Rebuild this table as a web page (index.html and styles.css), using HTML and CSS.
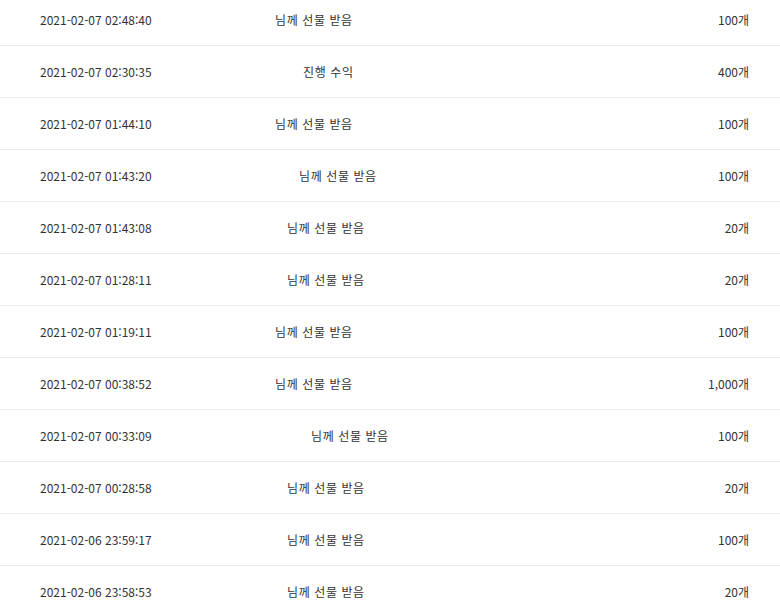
FILE: index.html
```html
<!DOCTYPE html>
<html lang="ko">
<head>
<meta charset="utf-8">
<link rel="stylesheet" href="styles.css">
</head>
<body>
<ul class="history">
  <li class="row"><span class="date">2021-02-07 02:48:40</span><span class="desc">님께 선물 받음</span><span class="amount">100개</span></li>
  <li class="row"><span class="date">2021-02-07 02:30:35</span><span class="desc off-28">진행 수익</span><span class="amount">400개</span></li>
  <li class="row"><span class="date">2021-02-07 01:44:10</span><span class="desc">님께 선물 받음</span><span class="amount">100개</span></li>
  <li class="row"><span class="date">2021-02-07 01:43:20</span><span class="desc off-24">님께 선물 받음</span><span class="amount">100개</span></li>
  <li class="row"><span class="date">2021-02-07 01:43:08</span><span class="desc off-12">님께 선물 받음</span><span class="amount">20개</span></li>
  <li class="row"><span class="date">2021-02-07 01:28:11</span><span class="desc off-12">님께 선물 받음</span><span class="amount">20개</span></li>
  <li class="row"><span class="date">2021-02-07 01:19:11</span><span class="desc">님께 선물 받음</span><span class="amount">100개</span></li>
  <li class="row"><span class="date">2021-02-07 00:38:52</span><span class="desc">님께 선물 받음</span><span class="amount">1,000개</span></li>
  <li class="row"><span class="date">2021-02-07 00:33:09</span><span class="desc off-36">님께 선물 받음</span><span class="amount">100개</span></li>
  <li class="row"><span class="date">2021-02-07 00:28:58</span><span class="desc off-12">님께 선물 받음</span><span class="amount">20개</span></li>
  <li class="row"><span class="date">2021-02-06 23:59:17</span><span class="desc off-12">님께 선물 받음</span><span class="amount">100개</span></li>
  <li class="row"><span class="date">2021-02-06 23:58:53</span><span class="desc off-12">님께 선물 받음</span><span class="amount">20개</span></li>
</ul>
</body>
</html>
```

FILE: styles.css
```css
html, body {
  margin: 0;
  padding: 0;
  background: #fff;
  overflow: hidden;
}
body {
  font-family: "Noto Sans CJK KR", "Noto Sans", sans-serif;
  font-size: 12px;
  color: #333;
}
.history {
  list-style: none;
  margin: -6px 0 0 0;
  padding: 0;
}
.row {
  display: grid;
  grid-template-columns: 235px 1fr auto;
  align-items: center;
  height: 51px;
  border-bottom: 1px solid #ececec;
  padding: 0 31px 0 40px;
}
.desc { letter-spacing: 0.6px; }
.desc.off-12 { padding-left: 12px; }
.desc.off-24 { padding-left: 24px; }
.desc.off-28 { padding-left: 28px; }
.desc.off-36 { padding-left: 36px; }
.amount { text-align: right; }
```
